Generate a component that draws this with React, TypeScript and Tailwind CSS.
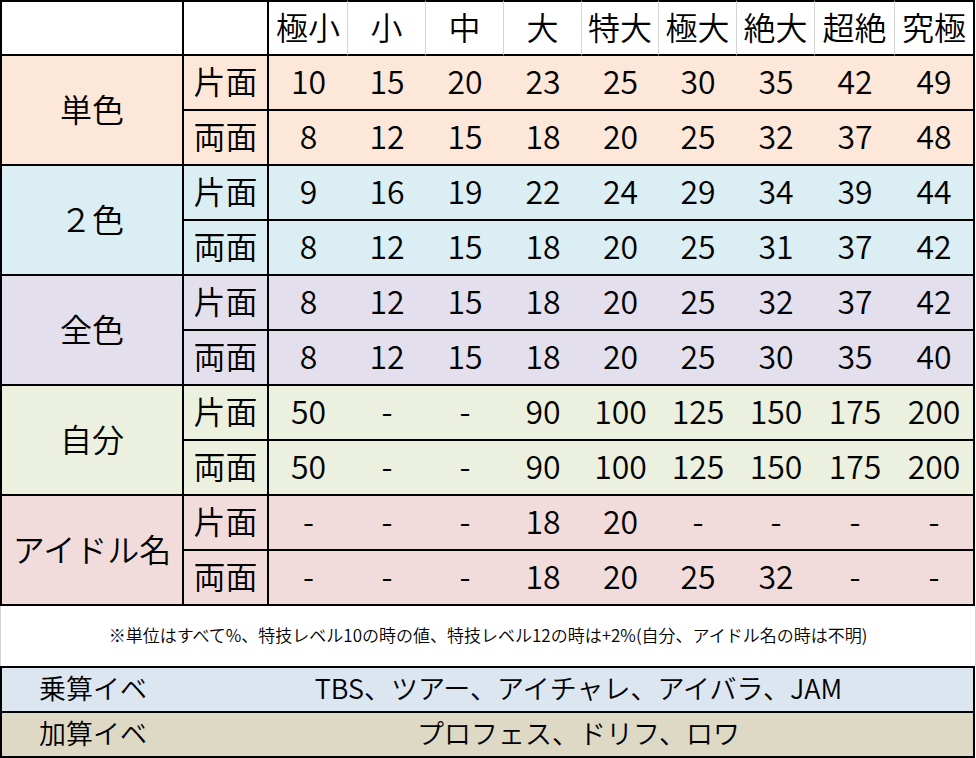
import React from "react";

const headers = ["極小", "小", "中", "大", "特大", "極大", "絶大", "超絶", "究極"];

type Group = { label: string; bg: string; rows: string[][] };

const groups: Group[] = [
  {
    label: "単色",
    bg: "bg-[#fce7d9]",
    rows: [
      ["10", "15", "20", "23", "25", "30", "35", "42", "49"],
      ["8", "12", "15", "18", "20", "25", "32", "37", "48"],
    ],
  },
  {
    label: "２色",
    bg: "bg-[#daeef3]",
    rows: [
      ["9", "16", "19", "22", "24", "29", "34", "39", "44"],
      ["8", "12", "15", "18", "20", "25", "31", "37", "42"],
    ],
  },
  {
    label: "全色",
    bg: "bg-[#e4dfec]",
    rows: [
      ["8", "12", "15", "18", "20", "25", "32", "37", "42"],
      ["8", "12", "15", "18", "20", "25", "30", "35", "40"],
    ],
  },
  {
    label: "自分",
    bg: "bg-[#ebf1de]",
    rows: [
      ["50", "-", "-", "90", "100", "125", "150", "175", "200"],
      ["50", "-", "-", "90", "100", "125", "150", "175", "200"],
    ],
  },
  {
    label: "アイドル名",
    bg: "bg-[#f2dcdb]",
    rows: [
      ["-", "-", "-", "18", "20", "-", "-", "-", "-"],
      ["-", "-", "-", "18", "20", "25", "32", "-", "-"],
    ],
  },
];

const font = { fontFamily: '"Noto Sans CJK JP", "Noto Sans", sans-serif' };

export default function App() {
  return (
    <div className="w-[976px] h-[758px] bg-white text-black overflow-hidden font-[350]" style={font}>
      <div className="grid w-[975px] grid-cols-[184px_85px_79px_78px_78px_78px_77px_78px_78px_80px_80px] grid-rows-[56px_repeat(10,55px)] text-[32px] leading-none">
        {/* header */}
        <div className="border-t-2 border-l-2 border-r-2 border-b-2 border-black bg-white" />
        <div className="border-t-2 border-r-2 border-b-2 border-black bg-white" />
        {headers.map((h, i) => (
          <div
            key={h}
            className={
              "flex items-center justify-center pb-[5px] border-t-2 border-b-2 border-t-black border-b-black bg-white " +
              (i === headers.length - 1 ? "border-r-2 border-r-black" : "border-r border-r-[#d4d4d4]")
            }
          >
            {h}
          </div>
        ))}
        {groups.map((g) => (
          <React.Fragment key={g.label}>
            <div
              className={`row-span-2 flex items-center justify-center pb-[5px] border-l-2 border-r-2 border-b-2 border-black ${g.bg}`}
            >
              {g.label}
            </div>
            {g.rows.map((r, ri) => (
              <React.Fragment key={ri}>
                <div
                  className={`col-start-2 flex items-center justify-center pb-[5px] border-r-2 border-b-2 border-black ${g.bg}`}
                >
                  {ri === 0 ? "片面" : "両面"}
                </div>
                {r.map((v, ci) => (
                  <div
                    key={ci}
                    className={`flex items-center justify-center pb-[5px] border-b-2 border-black ${g.bg} ${
                      ci === r.length - 1 ? "border-r-2" : ""
                    }`}
                  >
                    {v}
                  </div>
                ))}
              </React.Fragment>
            ))}
          </React.Fragment>
        ))}
      </div>
      <div className="flex h-[60px] w-[976px] items-center justify-center pb-[3px] border-l border-r border-[#d4d4d4] text-[17px]">
        ※単位はすべて%、特技レベル10の時の値、特技レベル12の時は+2%(自分、アイドル名の時は不明)
      </div>
      <div className="w-[975px] border-l-2 border-r-2 border-black text-[27px] leading-none">
        <div className="flex h-[45px] border-t-2 border-black bg-[#dce6f1]">
          <div className="flex w-[182px] items-center justify-center pb-[5px]">乗算イベ</div>
          <div className="flex flex-1 items-center justify-center pb-[5px]">TBS、ツアー、アイチャレ、アイバラ、JAM</div>
        </div>
        <div className="flex h-[47px] border-t-2 border-b-2 border-black bg-[#ddd9c4]">
          <div className="flex w-[182px] items-center justify-center pb-[5px]">加算イベ</div>
          <div className="flex flex-1 items-center justify-center pb-[5px]">プロフェス、ドリフ、ロワ</div>
        </div>
      </div>
    </div>
  );
}
